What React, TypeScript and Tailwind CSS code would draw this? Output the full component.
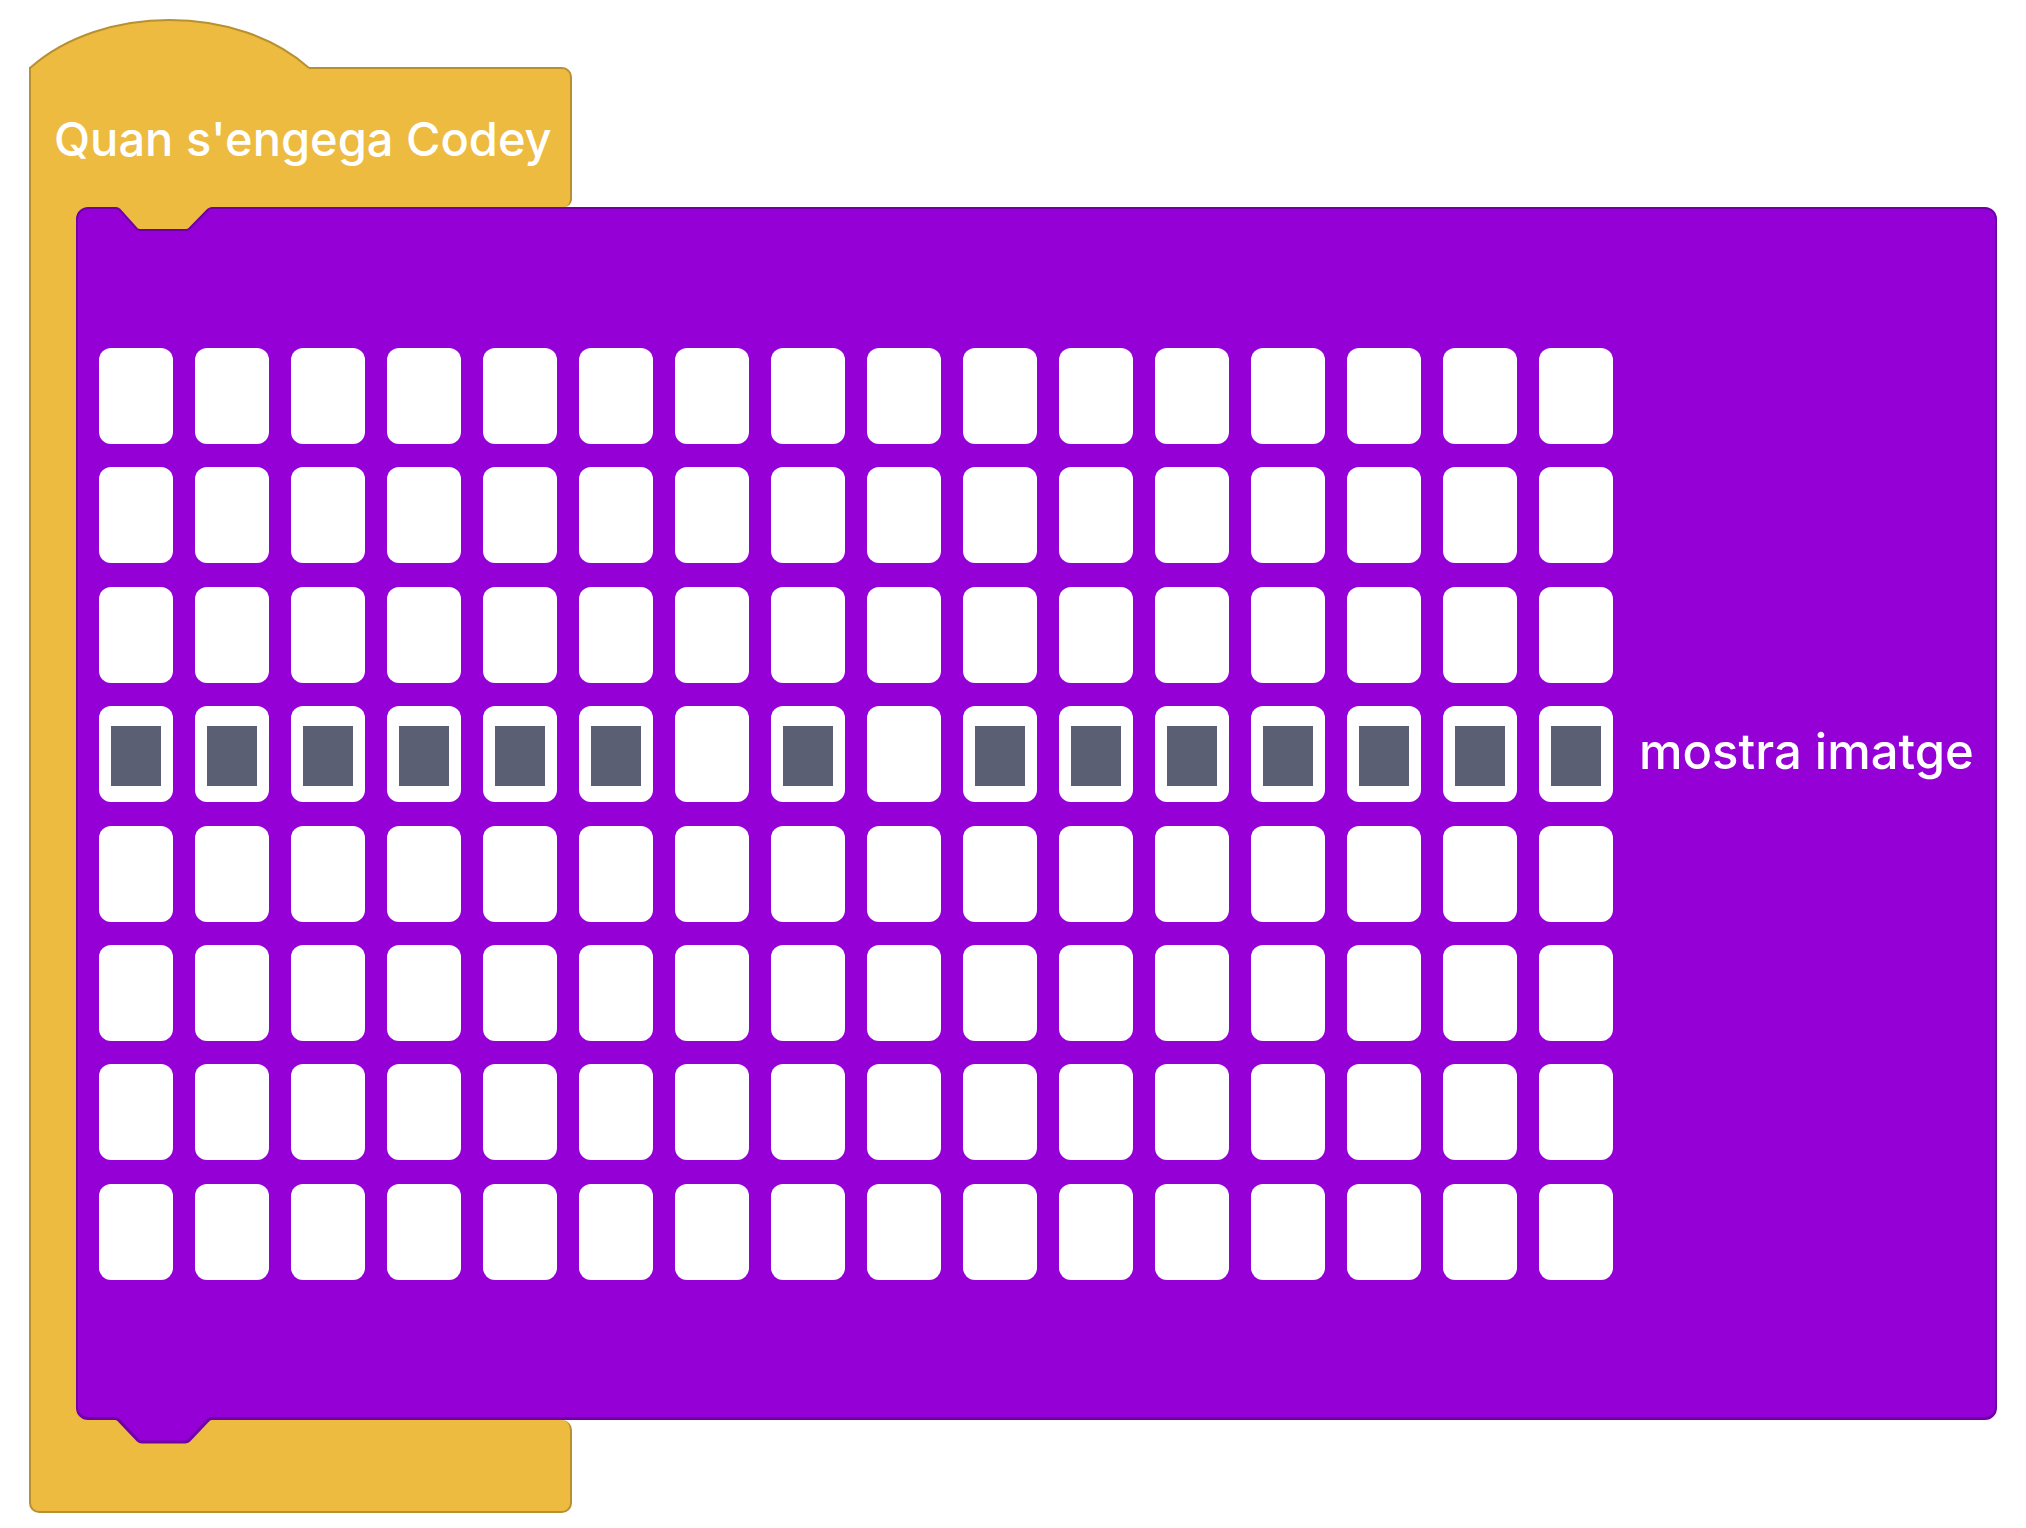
import React from "react";

const ROWS = 8;
const COLS = 16;
const darkRow = 3;
const darkCols = new Set([0, 1, 2, 3, 4, 5, 7, 9, 10, 11, 12, 13, 14, 15]);

function Cell({ dark }: { dark: boolean }) {
  return (
    <div className="w-[74px] h-[96px] shrink-0 rounded-[12px] bg-white flex justify-center pt-[20px]">
      {dark ? <div className="w-[50px] h-[60px] bg-[#5a5f73]" /> : null}
    </div>
  );
}

export default function App() {
  const font = { fontFamily: "Inter, 'Noto Sans', sans-serif" };
  return (
    <div className="w-[2026px] h-[1528px] bg-white overflow-hidden" style={font}>
      <div className="pt-[17px] pl-[29px] flex flex-col">
        {/* hat dome */}
        <svg width="543" height="54" className="block relative z-10 -mb-[4px]">
          <path d="M1,51 C 73,-13 208,-13 280,51 L 280,54 L 1,54 Z" fill="#edbb40" />
          <path d="M1,54 L1,51 C 73,-13 208,-13 280,51" fill="none" stroke="#b8902f" strokeWidth="2" />
        </svg>
        {/* top arm */}
        <div className="w-[543px] h-[140px] bg-[#edbb40] border-l-2 border-t-2 border-r-2 border-[#b8902f] rounded-tr-[10px] rounded-br-[8px] flex items-center pl-[23px]">
          <span className="text-white text-[47px] font-medium leading-none whitespace-nowrap">Quan s'engega Codey</span>
        </div>
        {/* middle */}
        <div className="w-[543px] bg-[#edbb40] border-l-2 border-[#b8902f] flex">
          <div className="relative ml-[45px] w-[1921px] h-[1213px] shrink-0 bg-[#9400d6] border-2 border-b-[3px] border-[#7000a6] rounded-[12px] pt-[139px] pl-[21px]">
            <svg width="140" height="30" className="absolute -top-[5px] -left-[2px]">
              <path
                d="M37,0 L37,4 L40,4 Q42,4 43.5,5.5 L61,25 Q62,26 64,26 L110,26 Q112,26 113,25 L132,5.5 Q134,4 136,4 L139,4 L139,0 Z"
                fill="#edbb40"
              />
              <path
                d="M37,4 L40,4 Q42,4 43.5,5.5 L61,25 Q62,26 64,26 L110,26 Q112,26 113,25 L132,5.5 Q134,4 136,4 L139,4"
                fill="none"
                stroke="#7000a6"
                strokeWidth="2"
              />
            </svg>
            <svg width="140" height="32" className="absolute -bottom-[30px] -left-[2px]">
              <path
                d="M37,0 L37,3.5 L39,3.5 Q41,3.5 42.5,5 L62,25.5 Q63.5,27 66,27 L109,27 Q111.5,27 113,25.5 L132.5,5 Q134,3.5 136,3.5 L138,3.5 L138,0 Z"
                fill="#9400d6"
              />
              <path
                d="M37,3.5 L39,3.5 Q41,3.5 42.5,5 L62,25.5 Q63.5,27 66,27 L109,27 Q111.5,27 113,25.5 L132.5,5 Q134,3.5 136,3.5 L138,3.5"
                fill="none"
                stroke="#7000a6"
                strokeWidth="3"
              />
            </svg>
            <div className="flex flex-col gap-[23.4px]">
              {Array.from({ length: ROWS }).map((_, r) => (
                <div key={r} className="flex items-center gap-[22px]">
                  {Array.from({ length: COLS }).map((_, c) => (
                    <Cell key={c} dark={r === darkRow && darkCols.has(c)} />
                  ))}
                  {r === darkRow ? (
                    <span className="ml-[4px] -mt-[6px] text-white text-[49px] font-medium leading-none whitespace-nowrap">mostra imatge</span>
                  ) : null}
                </div>
              ))}
            </div>
          </div>
        </div>
        {/* bottom arm */}
        <div className="w-[543px] h-[93px] bg-[#edbb40] border-l-2 border-r-2 border-b-2 border-[#b8902f] rounded-b-[10px] rounded-tr-[10px]" />
      </div>
    </div>
  );
}
